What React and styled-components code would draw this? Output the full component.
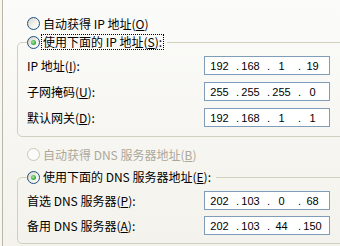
import React from 'react';
import styled, { createGlobalStyle } from 'styled-components';

const GlobalStyle = createGlobalStyle`
  html, body {
    margin: 0;
    padding: 0;
    overflow: hidden;
    background: #f7f6f1;
  }
`;

const Frame = styled.div`
  width: 338px;
  height: 246px;
  margin-left: 2px;
  box-sizing: border-box;
  border-left: 1px solid #b9b7aa;
  padding-top: 17px;
  background: linear-gradient(#fbfbf9, #f3f2ec);
  font-family: "Noto Sans CJK SC", sans-serif;
  font-size: 12px;
  color: #000;
  overflow: hidden;
`;

const RadioRow = styled.div`
  display: flex;
  align-items: center;
  gap: 3px;
  height: 13px;
  line-height: 13px;
  margin: ${p => p.$top || 0}px 0 0 24px;
  color: ${p => (p.$disabled ? '#aca899' : '#000')};
  white-space: nowrap;
`;

const RadioCircle = styled.span`
  display: flex;
  align-items: center;
  justify-content: center;
  flex: none;
  width: 13px;
  height: 13px;
  box-sizing: border-box;
  border-radius: 50%;
  border: 1px solid ${p => (p.$disabled ? '#cac8bb' : '#1c5180')};
  background: ${p =>
    p.$disabled ? '#fbfbf9' : 'linear-gradient(135deg, #d6d3c7 0%, #f3f2ec 55%, #ffffff 100%)'};
`;

const RadioDot = styled.span`
  width: 5px;
  height: 5px;
  border-radius: 50%;
  background: radial-gradient(circle at 40% 40%, #a9e5a9 0%, #3fae3f 60%, #218a21 100%);
`;

const FocusText = styled.span`
  border: 1px dotted ${p => (p.$focused ? '#000' : 'transparent')};
  padding: 0 1px;
  line-height: 14px;
  margin-left: -2px;
`;

const Group = styled.fieldset`
  width: 400px;
  box-sizing: border-box;
  margin: ${p => p.$top}px 0 0 14px;
  padding: ${p => p.$padTop}px 0 ${p => p.$padBottom}px 9px;
  border: 1px solid #d0d0bf;
  border-radius: 5px;
`;

const Legend = styled.legend`
  display: flex;
  align-items: center;
  gap: 3px;
  height: 16px;
  padding: 0 3px 0 0;
  margin: 0;
  white-space: nowrap;
`;

const Rows = styled.div`
  display: flex;
  flex-direction: column;
  gap: ${p => p.$gap}px;
`;

const FieldRow = styled.div`
  display: grid;
  grid-template-columns: 177px 126px;
  align-items: center;
  height: 19px;
  line-height: 14px;
  white-space: nowrap;
`;

const IpBox = styled.div`
  display: flex;
  align-items: center;
  height: 19px;
  box-sizing: border-box;
  padding-left: 3px;
  border: 1px solid #7f9db9;
  background: #fff;
  font-family: "Liberation Sans", Arial, sans-serif;
  font-size: 11px;
`;

const Octet = styled.span`
  width: 23px;
  text-align: center;
`;

const Sep = styled.span`
  width: 8px;
  text-align: right;
`;

const Key = ({ k }) => (
  <>
    (<u>{k}</u>)
  </>
);

const Radio = ({ checked, disabled }) => (
  <RadioCircle $disabled={disabled}>{checked && <RadioDot />}</RadioCircle>
);

const IpField = ({ value }) => (
  <IpBox>
    {value.map((o, i) => (
      <React.Fragment key={i}>
        {i > 0 && <Sep>.</Sep>}
        <Octet>{o}</Octet>
      </React.Fragment>
    ))}
  </IpBox>
);

const ipRows = [
  { label: 'IP 地址', k: 'I', value: ['192', '168', '1', '19'] },
  { label: '子网掩码', k: 'U', value: ['255', '255', '255', '0'] },
  { label: '默认网关', k: 'D', value: ['192', '168', '1', '1'] },
];

const dnsRows = [
  { label: '首选 DNS 服务器', k: 'P', value: ['202', '103', '0', '68'] },
  { label: '备用 DNS 服务器', k: 'A', value: ['202', '103', '44', '150'] },
];

export default function App() {
  return (
    <>
      <GlobalStyle />
      <Frame>
        <RadioRow>
          <Radio />
          <span>自动获得 IP 地址<Key k="O" /></span>
        </RadioRow>

        <Group $top={4} $padTop={6} $padBottom={9}>
          <Legend>
            <Radio checked />
            <FocusText $focused>使用下面的 IP 地址<Key k="S" />:</FocusText>
          </Legend>
          <Rows $gap={7}>
            {ipRows.map(r => (
              <FieldRow key={r.k}>
                <span>{r.label}<Key k={r.k} />:</span>
                <IpField value={r.value} />
              </FieldRow>
            ))}
          </Rows>
        </Group>

        <RadioRow $top={11} $disabled>
          <Radio disabled />
          <span>自动获得 DNS 服务器地址<Key k="B" /></span>
        </RadioRow>

        <Group $top={8} $padTop={6} $padBottom={8}>
          <Legend>
            <Radio checked />
            <FocusText>使用下面的 DNS 服务器地址<Key k="E" />:</FocusText>
          </Legend>
          <Rows $gap={6}>
            {dnsRows.map(r => (
              <FieldRow key={r.k}>
                <span>{r.label}<Key k={r.k} />:</span>
                <IpField value={r.value} />
              </FieldRow>
            ))}
          </Rows>
        </Group>
      </Frame>
    </>
  );
}
